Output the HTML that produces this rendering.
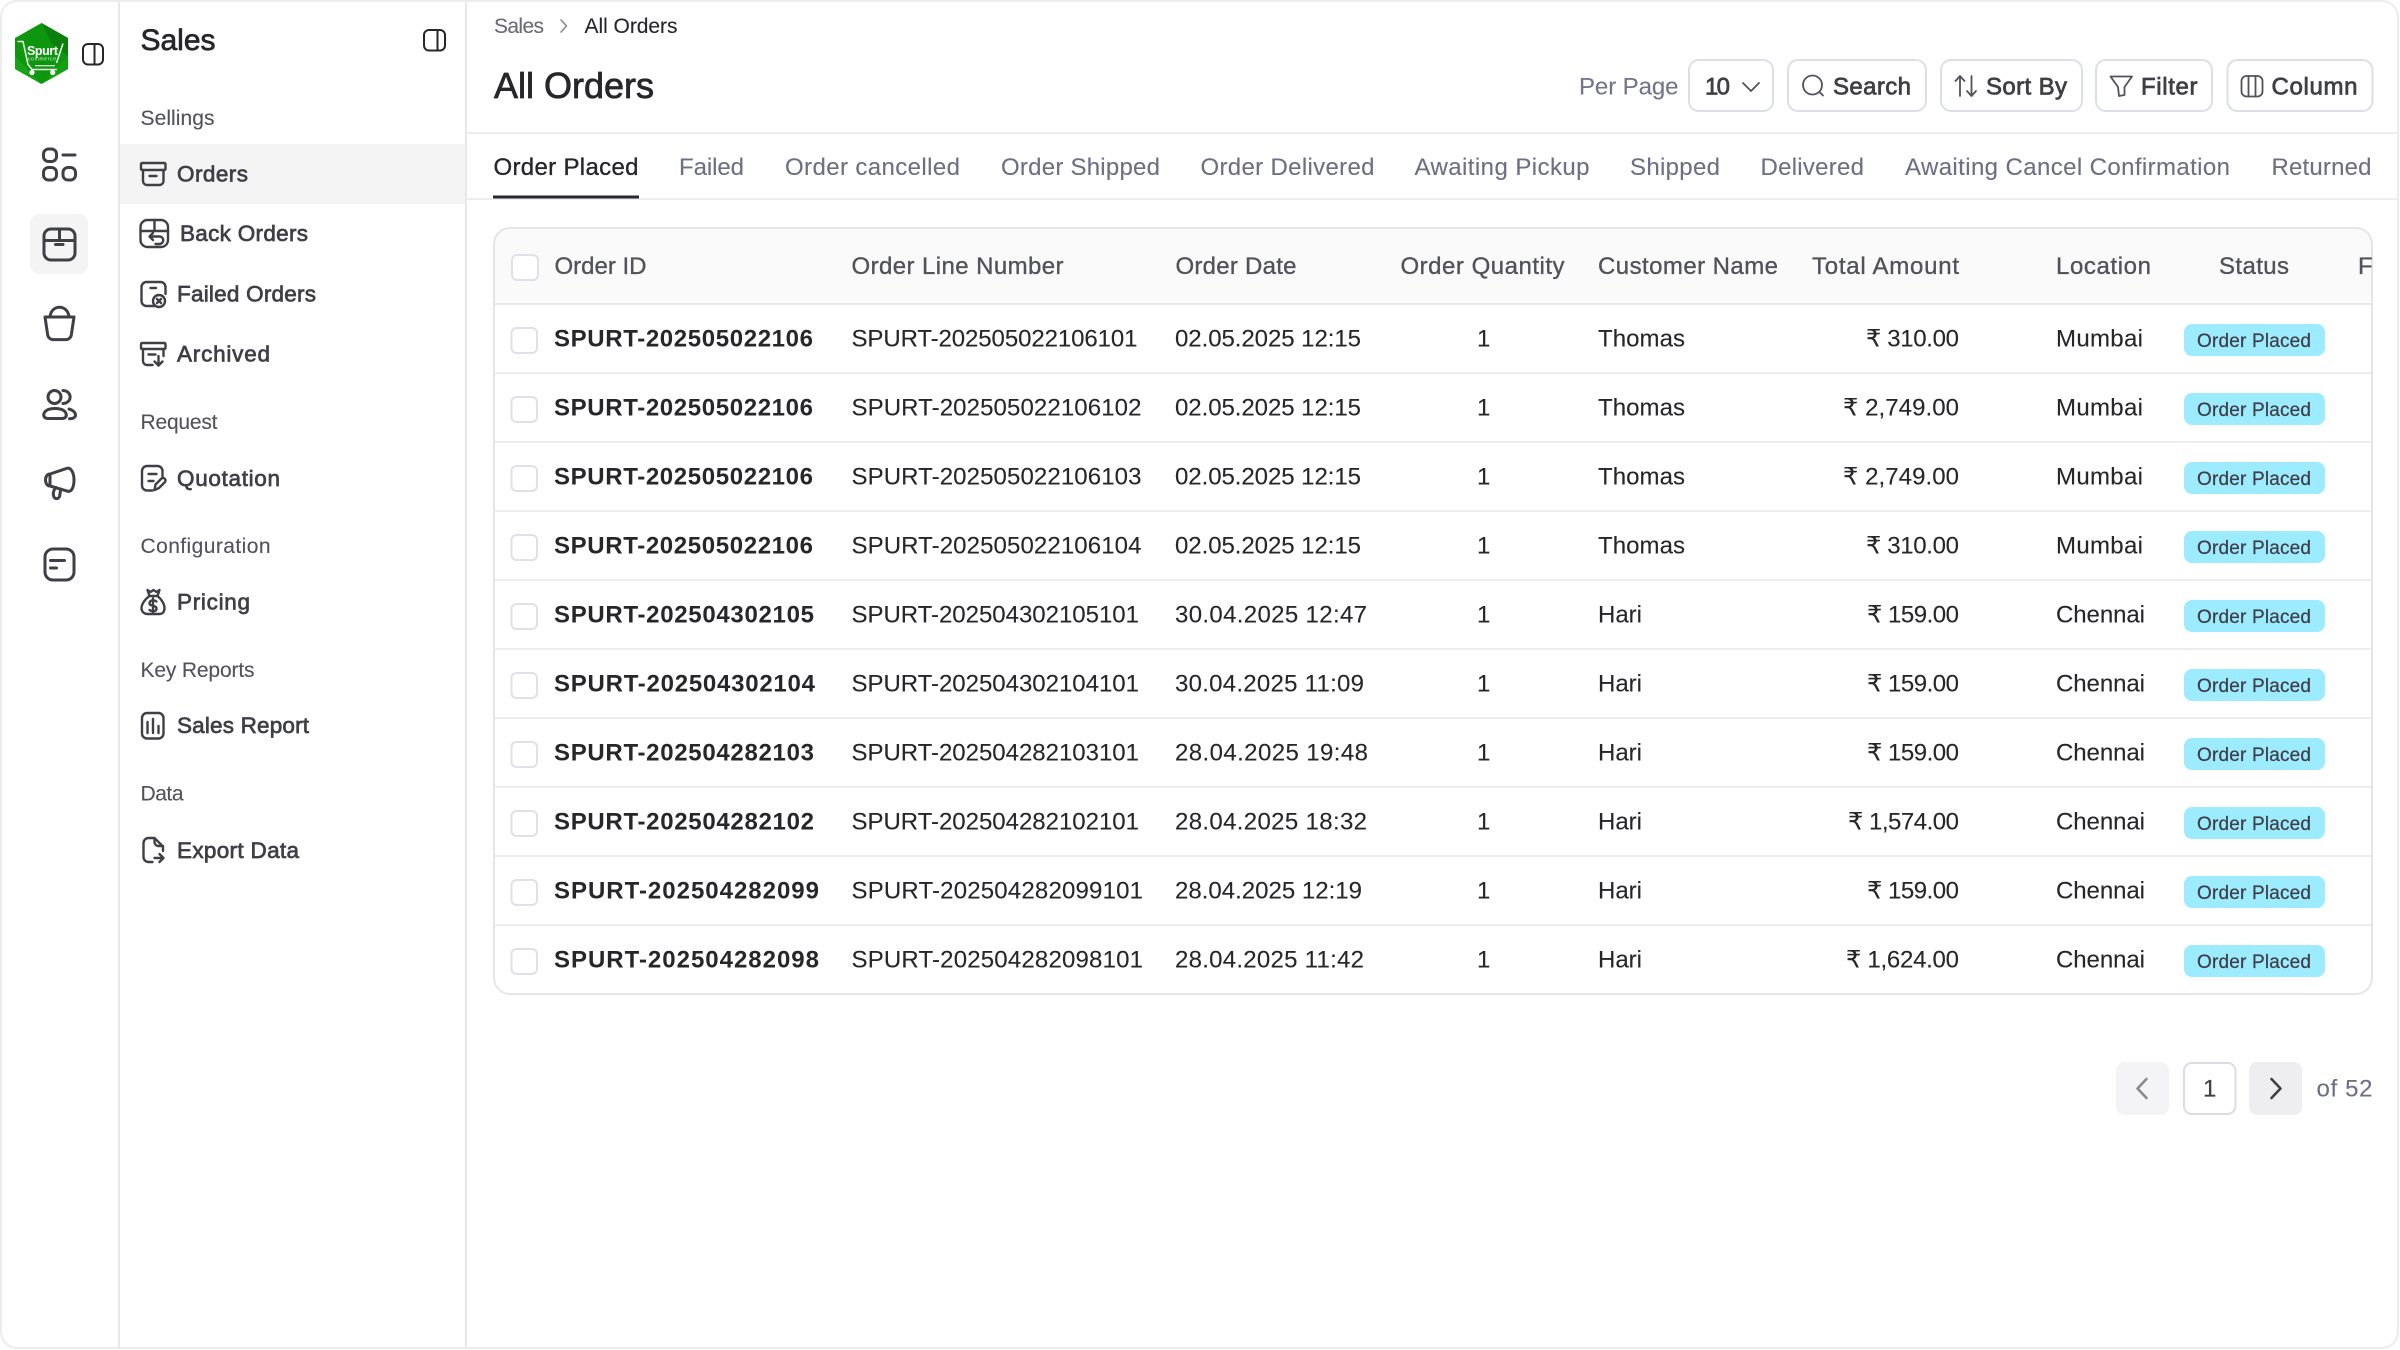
<!DOCTYPE html>
<html lang="en">
<head>
<meta charset="utf-8">
<title>All Orders</title>
<style>
html,body{margin:0;padding:0;background:#fff;width:2400px;height:1350px;overflow:hidden}
svg{display:block}
text{font-family:"Liberation Sans","DejaVu Sans",sans-serif;white-space:pre}
.ic{fill:none;stroke:#3f3f46;stroke-width:2.4;stroke-linecap:round;stroke-linejoin:round}
.rail{fill:none;stroke:#3f3f46;stroke-width:3;stroke-linecap:round;stroke-linejoin:round}
.tg{fill:none;stroke:#27272a;stroke-width:2;stroke-linejoin:round}
.tb{fill:none;stroke:#52525b;stroke-width:1.8;stroke-linecap:round;stroke-linejoin:round}
.btn{fill:#fff;stroke:#dcdfe6;stroke-width:2}
.lab{font-size:21px;fill:#52525b;stroke:#52525b;stroke-width:.12}
.nav{font-size:22.5px;fill:#3f3f46;stroke:#3f3f46;stroke-width:.7}
.tab{font-size:24px;fill:#6e6e85;stroke:#6e6e85;stroke-width:.12}
.th{font-size:24px;fill:#52525b;stroke:#52525b;stroke-width:.35}
.bt{font-size:24px;fill:#3f3f46;stroke:#3f3f46;stroke-width:.75}
.id{font-size:24px;font-weight:700;fill:#27272a}
.td{font-size:24px;fill:#27272a;stroke:#27272a;stroke-width:.12}
.bd{font-size:19px;fill:#3f3f46;stroke:#3f3f46;stroke-width:.25}
.cb{fill:#fff;stroke:#dfe0e8;stroke-width:2}
.pill{fill:#9debff}
</style>
</head>
<body>
<svg width="2400" height="1350" viewBox="0 0 2400 1350" xmlns="http://www.w3.org/2000/svg">
<defs>
  <clipPath id="tc"><rect x="494" y="228" width="1878" height="766" rx="16"/></clipPath>
</defs>

<!-- outer frame -->
<rect x="1" y="1" width="2397" height="1347" rx="16" fill="#fff" stroke="#ececec" stroke-width="2"/>
<rect x="118" y="2" width="2" height="1345" fill="#e8e8e8"/>
<rect x="465" y="2" width="2" height="1345" fill="#e8e8e8"/>

<!-- logo -->
<polygon points="41.5,23 68,38 68,69 41.5,84 15,69 15,38" fill="#0f960f"/>
<polygon points="41.5,23 68,38 68,56 52,44" fill="#0b7f0b"/>
<polygon points="15,56 41.5,84 15,69" fill="#16a316"/>
<polygon points="68,56 68,69 41.5,84" fill="#12a012"/>
<path d="M17.5 41.500H23L28 64.500L32 69.500H57M63 43.500L56.500 63" fill="none" stroke="#e8f6e8" stroke-width="1.500"/>
<path d="M35 65.700H55" stroke="#bfe6bf" stroke-width="1.400"/>
<circle cx="32" cy="72.500" r="2.600" fill="#fff"/><circle cx="52.700" cy="72.500" r="2.600" fill="#fff"/>
<text x="27" y="55" font-size="12.500" font-weight="700" fill="#fff" textLength="31">Spurt</text>
<text x="28" y="60.500" font-size="5" fill="#d5f0d5" textLength="28">commerce</text>

<!-- rail toggles -->
<g class="tg"><rect x="83" y="44" width="20" height="20.5" rx="5"/><path d="M94.5 44V64.5"/></g>
<g class="tg"><rect x="424" y="30" width="21" height="20.5" rx="5"/><path d="M437.5 30V50.5"/></g>

<!-- rail icons -->
<g class="rail">
  <rect x="43.5" y="149" width="13" height="12.5" rx="5"/><path d="M63 155H75"/>
  <rect x="43.5" y="167.5" width="13" height="12.5" rx="5"/><rect x="63" y="167.5" width="12.5" height="12.5" rx="5"/>
</g>
<rect x="30" y="214" width="58" height="60" rx="10" fill="#f4f4f5"/>
<g class="rail">
  <rect x="44" y="229" width="31" height="31" rx="7"/><path d="M44 240.5H75M59.500 229V240.5"/><path d="M55.500 244.500H63"/>
  <path d="M45 317H74L71.300 335a5.500 5.500 0 0 1-5.400 4.600H53.100a5.500 5.500 0 0 1-5.400-4.600Z"/><path d="M50 317C51 304 68 304 69 317"/>
  <circle cx="54.500" cy="397" r="6.500"/><path d="M63 390.500C72.500 391 72.500 403 63 403.500"/><path d="M48 418.500H62C65.500 418.500 67 416 66 413.500C64.500 409.500 60 408.500 55 408.500C50 408.500 45.500 409.500 44 413.500C43 416 44.500 418.500 48 418.500Z"/><path d="M69 409C73 410 75.500 412.500 75.500 415C75.500 417.500 73 418.700 69.500 418.700"/>
  <path d="M50 474L67 468.300C71 467.300 74 473 74 480C74 487 71.500 492 68 491.300L50 486M50 474C44 474 44 486 50 486Z"/><path d="M56 487.500C53.500 490 52.500 494 54 497C55.500 499.500 58.500 499 59.500 496.500C60 494.500 60.500 492 60.500 489"/>
  <rect x="45" y="549" width="29" height="31" rx="8"/><path d="M50.500 560.500H64.500M50.500 568H56.500"/>
</g>

<!-- sidebar heading -->
<text x="140.500" y="50" font-size="30" fill="#27272a" stroke="#27272a" stroke-width=".7" textLength="75">Sales</text>
<text class="lab" x="140.500" y="125" textLength="74">Sellings</text>
<rect x="120" y="144" width="345" height="60" fill="#f4f4f5"/>

<!-- nav icons -->
<g class="ic">
  <rect x="141" y="163" width="24.500" height="7" rx="1"/><path d="M143 170V181a4 4 0 0 0 4 4H159.500a4 4 0 0 0 4-4V170M149.500 176H156.500"/>
  <rect x="140.500" y="220" width="27.500" height="27" rx="7"/><path d="M140.500 231H168M154.500 220V231M149.500 236.500H159.500a3.600 3.600 0 0 1 0 7.500H155.500M153 233L149.500 236.500L153 240"/>
  <path d="M154.500 306H146.500a5 5 0 0 1-5-5V287a5 5 0 0 1 5-5H160.500a5 5 0 0 1 5 5V294M150.500 288H156"/><circle cx="159" cy="301" r="6"/><path d="M157 299L161 303M161 299L157 303"/>
  <rect x="141" y="343" width="24.500" height="6" rx="1"/><path d="M143 349V361a4 4 0 0 0 4 4H152.500M163.500 349V356M148.500 354.500H155.500M158.500 356V365.500M154.500 361.500L158.500 365.500L162.500 361.500"/>
  <path d="M152.500 490.500H147a5 5 0 0 1-5-5V471a5 5 0 0 1 5-5H157.500a5 5 0 0 1 5 5V478M148.500 474H156.500M148.500 481H153.500M155.500 484.500L161.500 478.500a2.500 2.500 0 0 1 3.500 3.500L159 488L154.500 490Z"/>
  <path d="M147.500 590L150.500 592L153.500 590L156.500 592L159.500 590L157.500 596H149.500ZM149.500 596C144 600 141.500 605 141.500 608C141.500 612 144.500 614 147.500 614H159.500C162.500 614 164.500 612 164.500 608C164.500 605 162.500 600 157.500 596M156.500 601.500C154 599.500 149.500 600 149.500 603.200C149.500 606.500 156.500 605 156.500 608.500C156.500 611.500 152.500 612.200 149.500 610M153 598.500V612.500"/>
  <rect x="142" y="713" width="21.500" height="25.500" rx="5"/><path d="M147.500 722V733M153 719V733M158.500 726V733"/>
  <path d="M154.500 838H148.500a5 5 0 0 0-5 5V857a5 5 0 0 0 5 5H152.500M154.500 838L163 846.500V851M154.500 838V842a4 4 0 0 0 4 4H163M154.500 858H163.500M159.500 854L163.500 858L159.500 862"/>
</g>

<!-- nav text -->
<text class="nav" x="177" y="181.500" textLength="71">Orders</text>
<text class="nav" x="180" y="241" textLength="128">Back Orders</text>
<text class="nav" x="177" y="301.500" textLength="139">Failed Orders</text>
<text class="nav" x="177" y="361.500" textLength="93">Archived</text>
<text class="lab" x="140.500" y="429" textLength="77">Request</text>
<text class="nav" x="177" y="486" textLength="103">Quotation</text>
<text class="lab" x="140.500" y="553" textLength="130">Configuration</text>
<text class="nav" x="177" y="609.500" textLength="73">Pricing</text>
<text class="lab" x="140.500" y="677" textLength="114">Key Reports</text>
<text class="nav" x="177" y="733" textLength="132">Sales Report</text>
<text class="lab" x="140.500" y="800.500" textLength="43">Data</text>
<text class="nav" x="177" y="858" textLength="122">Export Data</text>

<!-- breadcrumb + title -->
<text x="494" y="33" font-size="21" fill="#6b6b76" stroke="#6b6b76" stroke-width=".12" textLength="50">Sales</text>
<path d="M561 20L566.500 26L561 32" fill="none" stroke="#8a8a94" stroke-width="1.600" stroke-linecap="round" stroke-linejoin="round"/>
<text x="584.500" y="33" font-size="21" fill="#27272a" stroke="#27272a" stroke-width=".12" textLength="93">All Orders</text>
<text x="494" y="98" font-size="36" fill="#27272a" stroke="#27272a" stroke-width=".75" textLength="160">All Orders</text>

<!-- toolbar -->
<text x="1579" y="94.500" font-size="24" fill="#74748a" stroke="#74748a" stroke-width=".12" textLength="99.500">Per Page</text>
<rect class="btn" x="1689" y="60" width="84" height="51" rx="10"/>
<text class="bt" x="1705" y="94.500" textLength="25">10</text>
<path class="tb" d="M1743 83L1751 91L1759 83"/>
<rect class="btn" x="1788" y="60" width="138" height="51" rx="10"/>
<circle class="tb" cx="1812.500" cy="85" r="9.500"/><path class="tb" d="M1819.500 92L1823 95.500"/>
<text class="bt" x="1833" y="94.500" textLength="78">Search</text>
<rect class="btn" x="1941" y="60" width="141" height="51" rx="10"/>
<path class="tb" d="M1960 96V76M1955.500 81L1960 76L1964.500 81M1971.500 76V96M1967 91L1971.500 96L1976 91"/>
<text class="bt" x="1986" y="94.500" textLength="81">Sort By</text>
<rect class="btn" x="2096" y="60" width="116" height="51" rx="10"/>
<path class="tb" d="M2110.500 76.500H2132L2124.500 87V95L2119 96L2118 87Z"/>
<text class="bt" x="2141" y="94.500" textLength="56.500">Filter</text>
<rect class="btn" x="2227.500" y="60" width="145" height="51" rx="10"/>
<rect class="tb" x="2241.500" y="76" width="21" height="20.500" rx="5"/><path class="tb" d="M2248.500 76V96.500M2255.500 76V96.500"/>
<text class="bt" x="2271.500" y="94.500" textLength="86">Column</text>

<rect x="467" y="132" width="1931" height="2" fill="#ededf0"/>

<!-- tabs -->
<text x="493.500" y="175" font-size="24" fill="#27272a" stroke="#27272a" stroke-width=".35" textLength="145">Order Placed</text>
<text class="tab" x="679" y="175" textLength="65">Failed</text>
<text class="tab" x="785" y="175" textLength="175">Order cancelled</text>
<text class="tab" x="1001" y="175" textLength="159">Order Shipped</text>
<text class="tab" x="1200.500" y="175" textLength="174">Order Delivered</text>
<text class="tab" x="1414.500" y="175" textLength="175">Awaiting Pickup</text>
<text class="tab" x="1630" y="175" textLength="90">Shipped</text>
<text class="tab" x="1760.500" y="175" textLength="103.500">Delivered</text>
<text class="tab" x="1905" y="175" textLength="325">Awaiting Cancel Confirmation</text>
<text class="tab" x="2271.500" y="175" textLength="100">Returned</text>
<rect x="467" y="198" width="1931" height="2" fill="#ededf0"/>
<rect x="493" y="195.500" width="146" height="3" fill="#27272f"/>

<!-- table -->
<g clip-path="url(#tc)">
  <rect x="494" y="228" width="1878" height="76" fill="#fafafa"/>
  <rect x="494" y="303" width="1878" height="2" fill="#e9e9ec"/>
  <rect x="494" y="372" width="1878" height="2" fill="#ededf0"/>
  <rect x="494" y="441" width="1878" height="2" fill="#ededf0"/>
  <rect x="494" y="510" width="1878" height="2" fill="#ededf0"/>
  <rect x="494" y="579" width="1878" height="2" fill="#ededf0"/>
  <rect x="494" y="648" width="1878" height="2" fill="#ededf0"/>
  <rect x="494" y="717" width="1878" height="2" fill="#ededf0"/>
  <rect x="494" y="786" width="1878" height="2" fill="#ededf0"/>
  <rect x="494" y="855" width="1878" height="2" fill="#ededf0"/>
  <rect x="494" y="924" width="1878" height="2" fill="#ededf0"/>
</g>
<rect x="494" y="228" width="1878" height="766" rx="16" fill="none" stroke="#e6e6e9" stroke-width="2"/>

<rect class="cb" x="512" y="255" width="26" height="25" rx="5"/>
<text class="th" x="554.500" y="274" textLength="92">Order ID</text>
<text class="th" x="851.500" y="274" textLength="212">Order Line Number</text>
<text class="th" x="1175.500" y="274" textLength="121">Order Date</text>
<text class="th" x="1400.500" y="274" textLength="164">Order Quantity</text>
<text class="th" x="1598" y="274" textLength="180">Customer Name</text>
<text class="th" x="1812" y="274" textLength="147">Total Amount</text>
<text class="th" x="2056" y="274" textLength="95">Location</text>
<text class="th" x="2219" y="274" textLength="70">Status</text>
<text class="th" x="2358" y="274">F</text>

<!-- row 1 -->
<g>
<rect class="cb" x="511.500" y="328" width="25.500" height="25" rx="5"/>
<text class="id" x="554" y="346.500" textLength="259">SPURT-202505022106</text>
<text class="td" x="851.500" y="346.500" textLength="286">SPURT-202505022106101</text>
<text class="td" x="1175" y="346.500" textLength="186">02.05.2025 12:15</text>
<text class="td" x="1477" y="346.500">1</text>
<text class="td" x="1598" y="346.500" textLength="87">Thomas</text>
<text class="td" x="1866" y="346.500" textLength="93">₹ 310.00</text>
<text class="td" x="2056" y="346.500" textLength="87">Mumbai</text>
<rect class="pill" x="2184" y="324" width="141" height="32" rx="8"/>
<text class="bd" x="2197" y="347" textLength="114">Order Placed</text>
</g>
<!-- row 2 -->
<g transform="translate(0,69)">
<rect class="cb" x="511.500" y="328" width="25.500" height="25" rx="5"/>
<text class="id" x="554" y="346.500" textLength="259">SPURT-202505022106</text>
<text class="td" x="851.500" y="346.500" textLength="290">SPURT-202505022106102</text>
<text class="td" x="1175" y="346.500" textLength="186">02.05.2025 12:15</text>
<text class="td" x="1477" y="346.500">1</text>
<text class="td" x="1598" y="346.500" textLength="87">Thomas</text>
<text class="td" x="1843" y="346.500" textLength="116">₹ 2,749.00</text>
<text class="td" x="2056" y="346.500" textLength="87">Mumbai</text>
<rect class="pill" x="2184" y="324" width="141" height="32" rx="8"/>
<text class="bd" x="2197" y="347" textLength="114">Order Placed</text>
</g>
<!-- row 3 -->
<g transform="translate(0,138)">
<rect class="cb" x="511.500" y="328" width="25.500" height="25" rx="5"/>
<text class="id" x="554" y="346.500" textLength="259">SPURT-202505022106</text>
<text class="td" x="851.500" y="346.500" textLength="290">SPURT-202505022106103</text>
<text class="td" x="1175" y="346.500" textLength="186">02.05.2025 12:15</text>
<text class="td" x="1477" y="346.500">1</text>
<text class="td" x="1598" y="346.500" textLength="87">Thomas</text>
<text class="td" x="1843" y="346.500" textLength="116">₹ 2,749.00</text>
<text class="td" x="2056" y="346.500" textLength="87">Mumbai</text>
<rect class="pill" x="2184" y="324" width="141" height="32" rx="8"/>
<text class="bd" x="2197" y="347" textLength="114">Order Placed</text>
</g>
<!-- row 4 -->
<g transform="translate(0,207)">
<rect class="cb" x="511.500" y="328" width="25.500" height="25" rx="5"/>
<text class="id" x="554" y="346.500" textLength="259">SPURT-202505022106</text>
<text class="td" x="851.500" y="346.500" textLength="290">SPURT-202505022106104</text>
<text class="td" x="1175" y="346.500" textLength="186">02.05.2025 12:15</text>
<text class="td" x="1477" y="346.500">1</text>
<text class="td" x="1598" y="346.500" textLength="87">Thomas</text>
<text class="td" x="1866" y="346.500" textLength="93">₹ 310.00</text>
<text class="td" x="2056" y="346.500" textLength="87">Mumbai</text>
<rect class="pill" x="2184" y="324" width="141" height="32" rx="8"/>
<text class="bd" x="2197" y="347" textLength="114">Order Placed</text>
</g>
<!-- row 5 -->
<g transform="translate(0,276)">
<rect class="cb" x="511.500" y="328" width="25.500" height="25" rx="5"/>
<text class="id" x="554" y="346.500" textLength="260">SPURT-202504302105</text>
<text class="td" x="851.500" y="346.500" textLength="287.500">SPURT-202504302105101</text>
<text class="td" x="1175" y="346.500" textLength="192">30.04.2025 12:47</text>
<text class="td" x="1477" y="346.500">1</text>
<text class="td" x="1598" y="346.500" textLength="44">Hari</text>
<text class="td" x="1867" y="346.500" textLength="92">₹ 159.00</text>
<text class="td" x="2056" y="346.500" textLength="89">Chennai</text>
<rect class="pill" x="2184" y="324" width="141" height="32" rx="8"/>
<text class="bd" x="2197" y="347" textLength="114">Order Placed</text>
</g>
<!-- row 6 -->
<g transform="translate(0,345)">
<rect class="cb" x="511.500" y="328" width="25.500" height="25" rx="5"/>
<text class="id" x="554" y="346.500" textLength="261">SPURT-202504302104</text>
<text class="td" x="851.500" y="346.500" textLength="287.500">SPURT-202504302104101</text>
<text class="td" x="1175" y="346.500" textLength="189">30.04.2025 11:09</text>
<text class="td" x="1477" y="346.500">1</text>
<text class="td" x="1598" y="346.500" textLength="44">Hari</text>
<text class="td" x="1867" y="346.500" textLength="92">₹ 159.00</text>
<text class="td" x="2056" y="346.500" textLength="89">Chennai</text>
<rect class="pill" x="2184" y="324" width="141" height="32" rx="8"/>
<text class="bd" x="2197" y="347" textLength="114">Order Placed</text>
</g>
<!-- row 7 -->
<g transform="translate(0,414)">
<rect class="cb" x="511.500" y="328" width="25.500" height="25" rx="5"/>
<text class="id" x="554" y="346.500" textLength="260">SPURT-202504282103</text>
<text class="td" x="851.500" y="346.500" textLength="287.500">SPURT-202504282103101</text>
<text class="td" x="1175" y="346.500" textLength="193">28.04.2025 19:48</text>
<text class="td" x="1477" y="346.500">1</text>
<text class="td" x="1598" y="346.500" textLength="44">Hari</text>
<text class="td" x="1867" y="346.500" textLength="92">₹ 159.00</text>
<text class="td" x="2056" y="346.500" textLength="89">Chennai</text>
<rect class="pill" x="2184" y="324" width="141" height="32" rx="8"/>
<text class="bd" x="2197" y="347" textLength="114">Order Placed</text>
</g>
<!-- row 8 -->
<g transform="translate(0,483)">
<rect class="cb" x="511.500" y="328" width="25.500" height="25" rx="5"/>
<text class="id" x="554" y="346.500" textLength="260">SPURT-202504282102</text>
<text class="td" x="851.500" y="346.500" textLength="287.500">SPURT-202504282102101</text>
<text class="td" x="1175" y="346.500" textLength="192">28.04.2025 18:32</text>
<text class="td" x="1477" y="346.500">1</text>
<text class="td" x="1598" y="346.500" textLength="44">Hari</text>
<text class="td" x="1848" y="346.500" textLength="111">₹ 1,574.00</text>
<text class="td" x="2056" y="346.500" textLength="89">Chennai</text>
<rect class="pill" x="2184" y="324" width="141" height="32" rx="8"/>
<text class="bd" x="2197" y="347" textLength="114">Order Placed</text>
</g>
<!-- row 9 -->
<g transform="translate(0,552)">
<rect class="cb" x="511.500" y="328" width="25.500" height="25" rx="5"/>
<text class="id" x="554" y="346.500" textLength="265">SPURT-202504282099</text>
<text class="td" x="851.500" y="346.500" textLength="291.500">SPURT-202504282099101</text>
<text class="td" x="1175" y="346.500" textLength="187">28.04.2025 12:19</text>
<text class="td" x="1477" y="346.500">1</text>
<text class="td" x="1598" y="346.500" textLength="44">Hari</text>
<text class="td" x="1867" y="346.500" textLength="92">₹ 159.00</text>
<text class="td" x="2056" y="346.500" textLength="89">Chennai</text>
<rect class="pill" x="2184" y="324" width="141" height="32" rx="8"/>
<text class="bd" x="2197" y="347" textLength="114">Order Placed</text>
</g>
<!-- row 10 -->
<g transform="translate(0,621)">
<rect class="cb" x="511.500" y="328" width="25.500" height="25" rx="5"/>
<text class="id" x="554" y="346.500" textLength="265">SPURT-202504282098</text>
<text class="td" x="851.500" y="346.500" textLength="291.500">SPURT-202504282098101</text>
<text class="td" x="1175" y="346.500" textLength="189">28.04.2025 11:42</text>
<text class="td" x="1477" y="346.500">1</text>
<text class="td" x="1598" y="346.500" textLength="44">Hari</text>
<text class="td" x="1846" y="346.500" textLength="113">₹ 1,624.00</text>
<text class="td" x="2056" y="346.500" textLength="89">Chennai</text>
<rect class="pill" x="2184" y="324" width="141" height="32" rx="8"/>
<text class="bd" x="2197" y="347" textLength="114">Order Placed</text>
</g>

<!-- pagination -->
<rect x="2116" y="1062" width="53" height="53" rx="8" fill="#f4f4f6"/>
<path d="M2146.500 1079L2137.500 1088.500L2146.500 1098" fill="none" stroke="#8a8a8f" stroke-width="2.600" stroke-linecap="round" stroke-linejoin="round"/>
<rect x="2184" y="1063" width="51.500" height="51" rx="8" fill="#fff" stroke="#dcdce6" stroke-width="2"/>
<text x="2203" y="1096.500" font-size="24" fill="#3f3f46" stroke="#3f3f46" stroke-width=".2">1</text>
<rect x="2249" y="1062" width="53" height="53" rx="8" fill="#eeeef1"/>
<path d="M2271.500 1079L2280.500 1088.500L2271.500 1098" fill="none" stroke="#3f3f46" stroke-width="2.600" stroke-linecap="round" stroke-linejoin="round"/>
<text x="2316.500" y="1096.500" font-size="24" fill="#6e6e85" stroke="#6e6e85" stroke-width=".12" textLength="56">of 52</text>
</svg>
</body>
</html>
